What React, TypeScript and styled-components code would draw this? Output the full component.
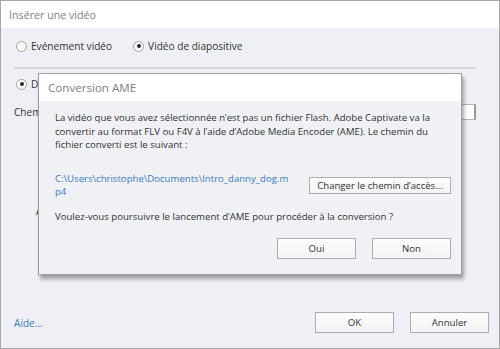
import styled, { createGlobalStyle } from 'styled-components'

const GlobalStyle = createGlobalStyle`
  html, body {
    margin: 0;
    padding: 0;
    background: #ffffff;
  }
  body {
    font-family: 'Open Sans', 'Noto Sans', sans-serif;
  }
`

const Window = styled.div`
  position: relative;
  width: 500px;
  height: 349px;
  box-sizing: border-box;
  border: 1px solid #a8a8a8;
  background: #eff0f5;
  display: flex;
  flex-direction: column;
  overflow: hidden;
`

const TitleBar = styled.div<{ $inset: number; $size: number }>`
  height: 27px;
  flex: none;
  display: flex;
  align-items: center;
  padding-left: ${({ $inset }) => $inset}px;
  background: #ffffff;
  color: #808080;
  font-size: ${({ $size }) => $size}px;
`

const Body = styled.div`
  flex: 1;
  display: flex;
  flex-direction: column;
  padding: 0 23px 0 13px;
  font-size: 10.1px;
  color: #333333;
`

const RadioRow = styled.div<{ $top: number }>`
  display: flex;
  align-items: center;
  gap: 21px;
  height: 20px;
  margin-top: ${({ $top }) => $top}px;
  padding-left: 2px;
`

const RadioLabel = styled.label`
  display: flex;
  align-items: center;
  gap: 4px;
  white-space: nowrap;
`

const RadioDot = styled.span<{ $checked?: boolean }>`
  position: relative;
  width: 9px;
  height: 9px;
  border-radius: 50%;
  border: 1px solid #a0a0a0;
  background: #ffffff;
  &::after {
    content: '';
    display: ${({ $checked }) => ($checked ? 'block' : 'none')};
    position: absolute;
    left: 2.5px;
    top: 2.5px;
    width: 4px;
    height: 4px;
    border-radius: 50%;
    background: #2b2b2b;
  }
`

const Separator = styled.div`
  height: 2px;
  margin-top: 11px;
  background: #d4d5da;
`

const FieldRow = styled.div`
  display: flex;
  align-items: center;
  gap: 10px;
  margin-top: 10px;
  height: 16px;
`

const PathInput = styled.div`
  flex: 1;
  height: 16px;
  box-sizing: border-box;
  border: 1px solid #b5b5b5;
  border-right: 2px solid #9a9a9a;
  background: #ffffff;
`

const Preview = styled.div`
  margin-top: 84px;
  padding-left: 22px;
  line-height: 14px;
`

const Footer = styled.div`
  margin-top: auto;
  margin-bottom: 15px;
  margin-right: -13px;
  display: flex;
  align-items: center;
  gap: 16px;
`

const HelpLink = styled.a`
  margin-right: auto;
  color: #3b7bbf;
  text-decoration: none;
`

const Button = styled.button<{ $w: number; $h: number }>`
  width: ${({ $w }) => $w}px;
  height: ${({ $h }) => $h}px;
  flex: none;
  box-sizing: border-box;
  border: 1px solid #adadad;
  background: linear-gradient(#fdfdfd, #f3f3f3);
  font-family: inherit;
  font-size: 9.6px;
  color: #333333;
  padding: 0;
`

const Modal = styled.div`
  position: absolute;
  left: 37px;
  top: 72px;
  width: 424px;
  height: 202px;
  box-sizing: border-box;
  border: 1px solid #9f9f9f;
  background: #f0f1f5;
  box-shadow: 2px 4px 4px rgba(0, 0, 0, 0.35);
  display: flex;
  flex-direction: column;
`

const ModalBody = styled.div`
  display: flex;
  flex-direction: column;
  padding: 10px 10px 0 16px;
  font-size: 9.6px;
  color: #333333;
  line-height: 13.5px;
  white-space: nowrap;
`

const PathRow = styled.div`
  display: flex;
  align-items: center;
  justify-content: space-between;
  margin-top: 20px;
`

const PathText = styled.div`
  color: #3b7bbf;
`

const Question = styled.div`
  margin-top: 11px;
`

const ModalButtons = styled.div`
  display: flex;
  justify-content: flex-end;
  gap: 16px;
  margin-top: 15px;
`

export default function App() {
  return (
    <>
      <GlobalStyle />
      <Window>
        <TitleBar $inset={8} $size={10.7}>Insérer une vidéo</TitleBar>
        <Body>
          <RadioRow $top={8}>
            <RadioLabel>
              <RadioDot />
              Evénement vidéo
            </RadioLabel>
            <RadioLabel>
              <RadioDot $checked />
              Vidéo de diapositive
            </RadioLabel>
          </RadioRow>
          <Separator />
          <RadioRow $top={5}>
            <RadioLabel>
              <RadioDot $checked />
              Depuis
            </RadioLabel>
          </RadioRow>
          <FieldRow>
            Chemin :
            <PathInput />
          </FieldRow>
          <Preview>Aperçu</Preview>
          <Footer>
            <HelpLink>Aide...</HelpLink>
            <Button $w={79} $h={21}>OK</Button>
            <Button $w={79} $h={21}>Annuler</Button>
          </Footer>
        </Body>

        <Modal>
          <TitleBar $inset={9} $size={11.6}>Conversion AME</TitleBar>
          <ModalBody>
            <div>
              La vidéo que vous avez sélectionnée n’est pas un fichier Flash. Adobe Captivate va la
              <br />
              convertir au format FLV ou F4V à l’aide d’Adobe Media Encoder (AME). Le chemin du
              <br />
              fichier converti est le suivant :
            </div>
            <PathRow>
              <PathText>
                C:\Users\christophe\Documents\Intro_danny_dog.m
                <br />
                p4
              </PathText>
              <Button $w={142} $h={17}>Changer le chemin d’accès...</Button>
            </PathRow>
            <Question>Voulez-vous poursuivre le lancement d’AME pour procéder à la conversion ?</Question>
            <ModalButtons>
              <Button $w={79} $h={21}>Oui</Button>
              <Button $w={79} $h={21}>Non</Button>
            </ModalButtons>
          </ModalBody>
        </Modal>
      </Window>
    </>
  )
}
